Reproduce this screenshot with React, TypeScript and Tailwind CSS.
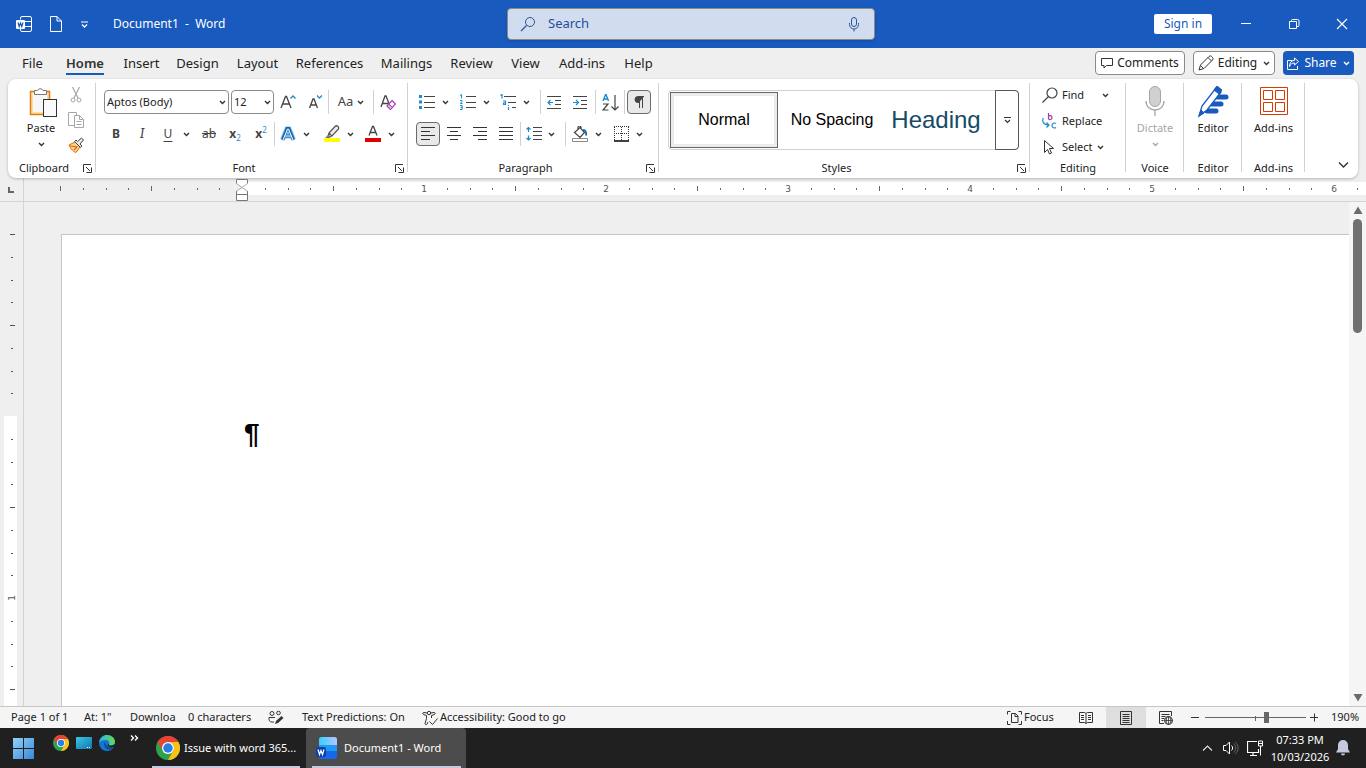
import React from 'react';

type IconProps = { w: number; h: number; className?: string; children: React.ReactNode };

const Icon: React.FC<IconProps> = ({ w, h, className = '', children }) => (
  <svg width={w} height={h} viewBox={`0 0 ${w} ${h}`} fill="none" className={`shrink-0 ${className}`} aria-hidden="true">
    {children}
  </svg>
);

const Caret: React.FC<{ className?: string }> = ({ className = 'text-[#333]' }) => (
  <Icon w={7} h={5} className={className}>
    <path d="M1 1l2.5 2.5L6 1" stroke="currentColor" strokeWidth="1.4" />
  </Icon>
);

const Sep = () => <div className="w-px h-6 bg-[#d1d1d1] shrink-0" />;

type BtnProps = { label: string; className?: string; children: React.ReactNode };

const IconButton: React.FC<BtnProps> = ({ label, className = 'w-[26px]', children }) => (
  <button aria-label={label} className={`h-6 shrink-0 flex items-center justify-center rounded hover:bg-gray-100 ${className}`}>
    {children}
  </button>
);

const CaretButton: React.FC<{ label: string }> = ({ label }) => (
  <IconButton label={label} className="w-[11px]">
    <Caret />
  </IconButton>
);

const Launcher: React.FC<{ label: string }> = ({ label }) => (
  <button aria-label={label} className="absolute right-1 top-1">
    <Icon w={9} h={9}>
      <path d="M.5 8V.5H8M3 3l4 4M8.5 3.5v5h-5" stroke="#333" />
    </Icon>
  </button>
);

type GroupProps = { title: string; className: string; launcher?: boolean; children: React.ReactNode };

const Group: React.FC<GroupProps> = ({ title, className, launcher, children }) => (
  <section aria-label={title} className={`relative flex flex-col pt-1 ${className}`}>
    <div className="h-[77px]">{children}</div>
    <div className="relative h-4 text-center leading-4">
      <span className={launcher ? 'pr-4' : ''}>{title}</span>
      {launcher && <Launcher label={`${title} settings`} />}
    </div>
    <div className="absolute right-0 top-1 bottom-[6px] w-px bg-[#d1d1d1]" />
  </section>
);

/* ---------- Title bar ---------- */

const TitleBar = () => (
  <header className="h-12 bg-[#185abd] text-white flex items-center text-xs shrink-0">
    <div className="flex-1 flex items-center pl-4">
      <button aria-label="Word">
        <Icon w={16} h={16}>
          <path d="M4.5 3.5V2A1.500 1.500 0 0 1 6 .5h8A1.500 1.500 0 0 1 15.500 2v12a1.500 1.500 0 0 1-1.500 1.500H6A1.500 1.500 0 0 1 4.500 14v-1.500M8 5.500h7.500M9 10.500h6.500" stroke="#fff" />
          <rect y="4" width="9" height="9" rx="1" fill="#fff" />
          <path d="M2 6.500l1.200 4L4.500 7l1.300 3.500 1.200-4" stroke="#185abd" strokeWidth="1.200" />
        </Icon>
      </button>
      <button aria-label="New document" className="ml-4">
        <Icon w={16} h={16}>
          <path d="M2.500.5h6.500l4.500 4.500v10.500h-11zM9 .5V5h4.500" stroke="#fff" />
        </Icon>
      </button>
      <button aria-label="Customize toolbar" className="ml-4">
        <Icon w={9} h={7}>
          <path d="M1 1h7" stroke="#fff" />
          <path d="M2 3.500L4.500 6 7 3.500" stroke="#fff" strokeWidth="1.300" />
        </Icon>
      </button>
      <h1 className="ml-6 whitespace-pre">Document1  -  Word</h1>
    </div>
    <label className="w-[368px] h-8 shrink-0 flex items-center bg-[#d1dcee] border border-[#8a8a8a] rounded px-3 shadow">
      <Icon w={16} h={16}>
        <circle cx="10" cy="6" r="4.500" stroke="#2b579a" />
        <path d="M6.500 9.500L1 15" stroke="#2b579a" strokeWidth="1.200" />
      </Icon>
      <input
        type="search"
        aria-label="Search"
        placeholder="Search"
        className="flex-1 min-w-0 ml-3 bg-transparent outline-none text-[13px] placeholder:text-[#1f4e9c]"
      />
      <Icon w={16} h={16}>
        <rect x="5.500" y="1.500" width="5" height="9" rx="2.500" stroke="#2b579a" />
        <path d="M3.500 7v1.500a4.500 4.500 0 0 0 9 0V7M8 13v2.500" stroke="#2b579a" />
      </Icon>
    </label>
    <div className="w-[491px] flex items-center justify-end">
      <button className="w-[58px] h-5 mr-2.5 bg-white text-[#185abd] rounded-xs leading-5">Sign in</button>
      <button aria-label="Minimize" className="w-12 h-12 flex items-center justify-center">
        <Icon w={12} h={12}><path d="M1 5.500h10" stroke="#fff" /></Icon>
      </button>
      <button aria-label="Restore" className="w-12 h-12 flex items-center justify-center">
        <Icon w={12} h={12}>
          <path d="M1.500 3.500h7v7h-7zM3.500 3V2.500a1 1 0 0 1 1-1h5a1.500 1.500 0 0 1 1.500 1.500v4.500a1 1 0 0 1-1 1H9" stroke="#fff" />
        </Icon>
      </button>
      <button aria-label="Close" className="w-12 h-12 flex items-center justify-center">
        <Icon w={12} h={12}><path d="M1 1l10 10M11 1L1 11" stroke="#fff" strokeWidth="1.200" /></Icon>
      </button>
    </div>
  </header>
);

/* ---------- Tabs ---------- */

const tabs = [
  { name: 'File', width: 'w-[43px]' },
  { name: 'Home', width: 'w-[62px]' },
  { name: 'Insert', width: 'w-[51px]' },
  { name: 'Design', width: 'w-[61px]' },
  { name: 'Layout', width: 'w-[59px]' },
  { name: 'References', width: 'w-[85px]' },
  { name: 'Mailings', width: 'w-[69px]' },
  { name: 'Review', width: 'w-[61px]' },
  { name: 'View', width: 'w-[47px]' },
  { name: 'Add-ins', width: 'w-[66px]' },
  { name: 'Help', width: 'w-[47px]' },
];

const TabBar = () => (
  <div className="h-[31px] flex items-start pl-[11px] pr-3 shrink-0 text-[13px]">
    <nav className="flex">
      {tabs.map((tab) => (
        <button key={tab.name} className={`flex justify-center pt-[5px] ${tab.width}`}>
          <span
            className={
              tab.name === 'Home'
                ? 'h-[22px] leading-5 border-b-2 border-[#185abd] font-semibold text-[#333]'
                : 'h-[22px] leading-5'
            }
          >
            {tab.name}
          </span>
        </button>
      ))}
    </nav>
    <div className="ml-auto flex gap-2 pt-[3px] text-xs">
      <button className="w-[90px] h-6 flex items-center justify-center gap-1 bg-white border border-[#8a8a8a] rounded">
        <Icon w={12} h={12}>
          <path d="M.5 1.500h11v7H5.500L3 11V8.500H.5z" stroke="#333" />
        </Icon>
        Comments
      </button>
      <button className="w-[82px] h-6 flex items-center justify-center gap-1 bg-white border border-[#8a8a8a] rounded">
        <Icon w={16} h={16}>
          <path d="M1 15l1.500-5L11 1.500a1.800 1.800 0 0 1 2.600 0l.9.9a1.800 1.800 0 0 1 0 2.600L6 13.500zM10 2.500L13.500 6M2.500 10.500l3 3" stroke="#333" />
        </Icon>
        Editing
        <Caret className="ml-0.5 text-[#333]" />
      </button>
      <button className="w-[71px] h-6 flex items-center justify-center gap-1 bg-[#185abd] text-white rounded">
        <Icon w={13} h={13}>
          <path d="M5.500 3.500h-5v9h10V9" stroke="#fff" />
          <path d="M7.500 1l4 3.500-4 3.500V6C5 6 3.500 7 2.500 9.500 2.500 6 4 3.500 7.500 3.300z" stroke="#fff" strokeLinejoin="round" />
        </Icon>
        Share
        <Caret className="ml-0.5 text-white" />
      </button>
    </div>
  </div>
);

/* ---------- Ribbon groups ---------- */

const ClipboardGroup = () => (
  <Group title="Clipboard" className="w-[88px]" launcher>
    <div className="flex pl-3">
      <button className="w-[42px] flex flex-col items-center pt-[3px]">
        <Icon w={32} h={32}>
          <g transform="translate(1 0)">
            <rect x="4" y="5" width="20" height="24" fill="#ffe0a3" />
            <path d="M4 5.500h19.500V14M4.500 5v23.500H17" stroke="#e07b12" strokeWidth="1.500" />
            <rect x="7" y="7" width="14" height="19" fill="#f7f7f7" />
            <path d="M8.500 8.500V4.500H11.500a3 3 0 0 1 5.500 0h3.500v4z" fill="#fff" stroke="#777" />
            <rect x="17.500" y="13.500" width="13" height="17" fill="#fafafa" stroke="#333" />
          </g>
        </Icon>
        <span className="leading-4 pt-0.5">Paste</span>
        <span className="pt-1.5"><Caret /></span>
      </button>
      <div className="flex flex-col items-center ml-0.5 gap-px">
        <IconButton label="Cut" className="w-6">
          <Icon w={12} h={18}>
            <path d="M2.500 1L8 12M9.500 1L4 12" stroke="#a6a6a6" strokeWidth="1.200" />
            <circle cx="3" cy="14" r="2" stroke="#a6a6a6" />
            <circle cx="9" cy="14" r="2" stroke="#a6a6a6" />
          </Icon>
        </IconButton>
        <IconButton label="Copy" className="w-6">
          <Icon w={16} h={18}>
            <path d="M6 14.500H.5V1.500h8V4" stroke="#a6a6a6" />
            <path d="M6.500 4.500h5L15.500 8.500v8h-9zM11.500 4.500v4h4M8.500 10.500h5M8.500 13.500h5" stroke="#a6a6a6" />
          </Icon>
        </IconButton>
        <IconButton label="Format painter" className="w-6">
          <Icon w={16} h={16}>
            <path d="M1 8l6-3 5 5-4 5.500c-2-.5-5.500-3.500-7-7.500z" fill="#ffd58a" stroke="#d8680f" />
            <path d="M2 9l7 1-3 3" stroke="#d8680f" strokeWidth="1.200" />
            <path d="M6.500 4.500l6 6 1.500-1.500-2-2 3.500-4-2-2L9.500 4.500 8 3z" fill="#e8e8e8" stroke="#444" />
          </Icon>
        </IconButton>
      </div>
    </div>
  </Group>
);

const FontGroup = () => (
  <Group title="Font" className="w-[312px]" launcher>
    <div className="h-[35px] flex items-center pl-2 pt-[3px]">
      <div className="relative">
        <select aria-label="Font name" className="w-[125px] h-6 pl-0.5 pr-4 appearance-none bg-white border border-[#8a8a8a] rounded">
          <option>Aptos (Body)</option>
        </select>
        <div className="absolute right-[3px] top-[10px] pointer-events-none"><Caret /></div>
      </div>
      <div className="relative ml-0.5">
        <select aria-label="Font size" className="w-[43px] h-6 pl-0.5 pr-4 appearance-none bg-white border border-[#8a8a8a] rounded">
          <option>12</option>
        </select>
        <div className="absolute right-[3px] top-[10px] pointer-events-none"><Caret /></div>
      </div>
      <IconButton label="Increase font size" className="ml-px w-[26px]">
        <Icon w={16} h={16}>
          <path d="M1 14L5.500 2.500h1L11 14M2.500 10h7" stroke="#444" strokeWidth="1.300" />
          <path d="M10.500 4.500L13 2l2.500 2.500" stroke="#1e8bcd" strokeWidth="1.300" />
        </Icon>
      </IconButton>
      <IconButton label="Decrease font size" className="ml-px w-[26px]">
        <Icon w={16} h={16}>
          <path d="M2.500 14L6 5h1l3.500 9M4 11h5" stroke="#444" strokeWidth="1.300" />
          <path d="M10 1.500L12.500 4 15 1.500" stroke="#1e8bcd" strokeWidth="1.300" />
        </Icon>
      </IconButton>
      <Sep />
      <IconButton label="Change case" className="w-11 gap-1">
        <span className="text-[13px] text-[#444]">Aa</span>
        <Caret />
      </IconButton>
      <Sep />
      <IconButton label="Clear formatting" className="ml-px w-[26px]">
        <Icon w={16} h={16}>
          <path d="M1 13L5 2h1l3 7.500M2.500 9.500h6" stroke="#444" strokeWidth="1.300" />
          <path d="M12 6.500l3.500 3.500-5 5.500L7 12z" fill="#fff" stroke="#a33fb0" strokeWidth="1.200" />
          <path d="M7 12l2-2 3.500 3.500-2 2z" fill="#d9a6e0" stroke="#a33fb0" />
        </Icon>
      </IconButton>
    </div>
    <div className="h-8 flex items-center pl-[7px] text-xs text-[#444]">
      <IconButton label="Bold"><b>B</b></IconButton>
      <IconButton label="Italic"><i className="font-serif text-sm">I</i></IconButton>
      <IconButton label="Underline"><span className="underline underline-offset-3">U</span></IconButton>
      <CaretButton label="Underline options" />
      <IconButton label="Strikethrough" className="ml-1 w-[26px]"><s>ab</s></IconButton>
      <IconButton label="Subscript">
        <b>x</b><span className="text-[8px] pt-2 text-[#1e8bcd]">2</span>
      </IconButton>
      <IconButton label="Superscript">
        <b>x</b><span className="text-[8px] pb-2 text-[#1e8bcd]">2</span>
      </IconButton>
      <Sep />
      <IconButton label="Text effects">
        <Icon w={16} h={16}>
          <path d="M2.500 13.500L7 3h2l4.500 10.500M5 10h6" stroke="#83c0ea" strokeWidth="5" />
          <path d="M2.500 14L7 2.500h2L13.500 14M5 10h6" stroke="#1566b0" strokeWidth="3" />
          <path d="M3 14L7.500 3h1L13 14M5 10h6" stroke="#fff" />
        </Icon>
      </IconButton>
      <CaretButton label="Text effects options" />
      <IconButton label="Highlight color" className="ml-[7px] w-[26px]">
        <Icon w={16} h={18}>
          <path d="M5 8l6-6.500c1-1 2-1 3 0s1 2 0 3L8 11zM5 8l-1 3.500 1 .5 3-1" fill="#eee" stroke="#555" strokeWidth="1.200" />
          <path d="M4 10l-3 3h5l1-2z" fill="#777" />
          <path d="M0 13h16v4H0z" fill="#ff0" />
        </Icon>
      </IconButton>
      <CaretButton label="Highlight options" />
      <IconButton label="Font color" className="ml-1 w-[26px]">
        <Icon w={16} h={18}>
          <path d="M4 10.500L7.500 1.500h1l3.500 9M5.500 7.500h5" stroke="#444" strokeWidth="1.300" />
          <path d="M0 13h16v4H0z" fill="#e00000" />
        </Icon>
      </IconButton>
      <CaretButton label="Font color options" />
    </div>
  </Group>
);

const ParagraphGroup = () => (
  <Group title="Paragraph" className="w-[251px]" launcher>
    <div className="h-[35px] flex items-center pl-[6px] pt-[3px]">
      <IconButton label="Bullets">
        <Icon w={16} h={16}>
          <path d="M0 1h3v3H0zM0 6.500h3v3H0zM0 12h3v3H0z" fill="#1e8bcd" />
          <path d="M5 2.500h11M5 8.500h11M5 13.500h11" stroke="#444" />
        </Icon>
      </IconButton>
      <CaretButton label="Bullets options" />
      <IconButton label="Numbering" className="ml-1 w-[26px]">
        <Icon w={16} h={16}>
          <path d="M0 1.500l1.500-1v4M0 6.500h2v1.200L.3 9.500H2.500M0 11.500h2.200v4H0M.5 13.500h2" stroke="#1e8bcd" />
          <path d="M6 2.500h10M6 8.500h10M6 13.500h10" stroke="#444" />
        </Icon>
      </IconButton>
      <CaretButton label="Numbering options" />
      <IconButton label="Multilevel list" className="ml-[3px] w-[26px]">
        <Icon w={16} h={16}>
          <path d="M.5 1.500l1.500-1v4M3 7h2.500v3.500H3.500V9H5.500M8.500 11v1M8.500 13v3" stroke="#1e8bcd" strokeWidth="1.200" />
          <path d="M4 2.500h12M8 8.500h8M12 13.500h4" stroke="#444" />
        </Icon>
      </IconButton>
      <CaretButton label="Multilevel options" />
      <div className="w-2" />
      <Sep />
      <IconButton label="Decrease indent">
        <Icon w={14} h={14}>
          <path d="M0 1.500h14M8 5.500h6M8 9.500h6M0 13.500h14" stroke="#444" />
          <path d="M6 7.500H1M3.500 5L1 7.500 3.500 10" stroke="#1e8bcd" strokeWidth="1.200" />
        </Icon>
      </IconButton>
      <IconButton label="Increase indent">
        <Icon w={14} h={14}>
          <path d="M0 1.500h14M8 5.500h6M8 9.500h6M0 13.500h14" stroke="#444" />
          <path d="M0 7.500h5M3 5l2.500 2.500L3 10" stroke="#1e8bcd" strokeWidth="1.200" />
        </Icon>
      </IconButton>
      <div className="w-0.5" />
      <Sep />
      <IconButton label="Sort" className="w-7">
        <Icon w={17} h={17}>
          <path d="M1 7L3.500.8h.6L6.500 7M2 5h3.500" stroke="#1e8bcd" strokeWidth="1.400" />
          <path d="M1 10h5L1 16h5.500" stroke="#444" strokeWidth="1.200" />
          <path d="M13 1v15M9.500 12.500L13 16l3.500-3.500" stroke="#444" strokeWidth="1.200" />
        </Icon>
      </IconButton>
      <Sep />
      <IconButton label="Show paragraph marks" className="ml-0.5 w-6 border border-[#6b6b6b] bg-[#e9e9e9]">
        <Icon w={10} h={12}>
          <path d="M10 .5H4a3 3 0 0 0 0 6h1" fill="#444" stroke="#444" />
          <path d="M5.500 0v12M8.500 0v12" stroke="#444" />
        </Icon>
      </IconButton>
    </div>
    <div className="h-8 flex items-center pl-2">
      <IconButton label="Align left" className="w-6 border border-[#6b6b6b] bg-[#e9e9e9]">
        <Icon w={14} h={14}><path d="M0 .5h14M0 4.500h9M0 8.500h14M0 12.500h9" stroke="#333" /></Icon>
      </IconButton>
      <IconButton label="Center" className="ml-px w-[26px]">
        <Icon w={14} h={14}><path d="M0 .5h14M3 4.500h8M0 8.500h14M3 12.500h8" stroke="#333" /></Icon>
      </IconButton>
      <IconButton label="Align right">
        <Icon w={14} h={14}><path d="M0 .5h14M5 4.500h9M0 8.500h14M5 12.500h9" stroke="#333" /></Icon>
      </IconButton>
      <IconButton label="Justify">
        <Icon w={14} h={14}><path d="M0 .5h14M0 4.500h14M0 8.500h14M0 12.500h14" stroke="#333" /></Icon>
      </IconButton>
      <div className="w-px" />
      <Sep />
      <IconButton label="Line spacing" className="ml-px w-6">
        <Icon w={16} h={16}>
          <path d="M2.500 1v5M.5 3.500l2-2 2 2M2.500 9.500v5M.5 12l2 2 2-2" stroke="#1e8bcd" strokeWidth="1.200" />
          <path d="M7 1.500h9M7 5.500h9M7 9.500h9M7 13.500h9" stroke="#444" />
        </Icon>
      </IconButton>
      <CaretButton label="Line spacing options" />
      <div className="w-2" />
      <Sep />
      <IconButton label="Shading" className="ml-px w-[26px]">
        <Icon w={16} h={16}>
          <path d="M2.500 6.500L8 1.500l4.500 5L8 11.500zM6 3V1.500a1.500 1.500 0 0 1 3 0V3" stroke="#444" strokeWidth="1.200" />
          <path d="M11 4c3 0 3.500 3 3 5.500" stroke="#1e6fb0" strokeWidth="2" />
          <path d="M.5 12.500h15v3H.5z" fill="#fff" stroke="#8a8a8a" />
        </Icon>
      </IconButton>
      <CaretButton label="Shading options" />
      <IconButton label="Borders" className="ml-1 w-[26px]">
        <Icon w={15} h={16}>
          <path d="M.5 1v13M7.500 1v13M14.500 1v13M0 .5h15M0 7.500h15" stroke="#333" strokeDasharray="1 1" />
          <path d="M0 15h15" stroke="#000" strokeWidth="1.500" />
        </Icon>
      </IconButton>
      <CaretButton label="Borders options" />
    </div>
  </Group>
);

const StylesGroup = () => (
  <Group title="Styles" className="flex-1 min-w-[371px]" launcher>
    <div className="pl-[9px] pr-[11px] pt-[7px]">
      <div className="h-[60px] flex border border-[#d1d1d1] rounded font-['Liberation_Sans',sans-serif] text-base text-black">
        <button className="w-[108px] m-px h-14 border border-[#666] shadow-[inset_0_0_0_3px_#ebebeb]">Normal</button>
        <button className="w-[106px] text-center whitespace-nowrap">No Spacing</button>
        <button className="flex-1 pr-2 text-[#164b66] text-2xl overflow-hidden">Heading</button>
        <button aria-label="More styles" className="w-6 -my-px -mr-px border border-[#555] rounded-r flex items-center justify-center">
          <Icon w={7} h={8}>
            <path d="M0 1.500h7" stroke="#333" />
            <path d="M1 4l2.500 2.500L6 4" stroke="#333" strokeWidth="1.200" />
          </Icon>
        </button>
      </div>
    </div>
  </Group>
);

const EditingGroup = () => (
  <Group title="Editing" className="w-24">
    <div className="flex flex-col items-start pl-3">
      <button className="h-6 flex items-center gap-1">
        <Icon w={16} h={16}>
          <circle cx="10" cy="6" r="5" stroke="#444" strokeWidth="1.200" />
          <path d="M6.500 9.500L.5 15.500" stroke="#444" strokeWidth="1.200" />
        </Icon>
        <span className="w-9 text-left">Find</span>
        <Caret />
      </button>
      <button className="h-7 flex items-center gap-1">
        <Icon w={16} h={16}>
          <path d="M6.500 0v6.500M6.500 3.500c1-1.500 3.500-1 3.500 1S7.500 7.500 6.500 5.500" stroke="#a33fb0" strokeWidth="1.200" />
          <path d="M14 10.500c-1.500-1-4-.5-4 2s2.500 3 4 2M1.500 5C-.5 8 1.500 12 7 12M4.500 9.500L7 12l-2.500 2.500" stroke="#1e8bcd" strokeWidth="1.200" />
        </Icon>
        Replace
      </button>
      <button className="h-6 flex items-center gap-1">
        <Icon w={16} h={16}>
          <path d="M2.500 1.500v12l3-3 2 4.500 2-1-2-4.500h4z" stroke="#333" />
        </Icon>
        Select
        <Caret />
      </button>
    </div>
  </Group>
);

const VoiceGroup = () => (
  <Group title="Voice" className="w-[58px]">
    <button disabled className="w-full flex flex-col items-center pt-[3px] text-[#a6a6a6]">
      <Icon w={20} h={32}>
        <rect x="4.500" y=".5" width="11" height="20" rx="5.500" fill="#d0d0d0" stroke="#a6a6a6" />
        <path d="M1 15c0 12 18 12 18 0M10 24v6" stroke="#a6a6a6" strokeWidth="1.300" />
      </Icon>
      <span className="leading-4 pt-0.5">Dictate</span>
      <span className="pt-1.5"><Caret className="text-[#a6a6a6]" /></span>
    </button>
  </Group>
);

const EditorGroup = () => (
  <Group title="Editor" className="w-[58px]">
    <button className="w-full flex flex-col items-center pt-[3px]">
      <Icon w={32} h={32}>
        <path d="M20 11h9M15 18h9M10 25h9" stroke="#185abd" strokeWidth="5" strokeLinecap="round" />
        <path d="M2 30l3-10L19 2l5 4L10 24z" fill="#fff" stroke="#185abd" strokeWidth="1.300" />
        <path d="M17 4l3-4 5 4-3 4zM2 30l2-6 3 3z" fill="#185abd" stroke="#185abd" />
      </Icon>
      <span className="leading-4 pt-0.5">Editor</span>
    </button>
  </Group>
);

const AddinsGroup = () => (
  <Group title="Add-ins" className="w-[63px]">
    <button className="w-full flex flex-col items-center pt-[3px]">
      <Icon w={28} h={32}>
        <path d="M.5 1.500h27v27H.5zM3.500 4.500h9v9h-9zM15.500 4.500h9v9h-9zM3.500 16.500h9v9h-9zM15.500 16.500h9v9h-9z" stroke="#d83b01" />
      </Icon>
      <span className="leading-4 pt-0.5">Add-ins</span>
    </button>
  </Group>
);

const Ribbon = () => (
  <div className="mx-2 h-[99px] flex shrink-0 bg-white rounded-lg shadow-[0_1px_3px_rgba(0,0,0,0.25)] text-[11px] relative">
    <ClipboardGroup />
    <FontGroup />
    <ParagraphGroup />
    <StylesGroup />
    <EditingGroup />
    <VoiceGroup />
    <EditorGroup />
    <AddinsGroup />
    <div className="w-[53px] flex items-end justify-end pr-[9px] pb-[9px]">
      <button aria-label="Collapse ribbon">
        <Icon w={11} h={8}><path d="M1 1.500L5.500 6 10 1.500" stroke="#333" strokeWidth="1.400" /></Icon>
      </button>
    </div>
  </div>
);

/* ---------- Rulers ---------- */

const EIGHTHS = [0, 1, 2, 3, 4, 5, 6, 7];

const HInch: React.FC<{ label?: string; edge?: boolean; className?: string }> = ({ label, edge, className = '' }) => (
  <div className={`w-[182px] h-[13px] shrink-0 grid grid-cols-8 ${className}`}>
    {EIGHTHS.map((i) => (
      <div key={i} className="flex items-center">
        {i === 0 && label && <span className="w-4 -ml-2 text-center leading-3">{label}</span>}
        {((i === 0 && edge) || i === 4) && <span className="w-px h-[5px] bg-[#666]" />}
        {i !== 0 && i !== 4 && <span className="w-px h-0.5 bg-[#666]" />}
      </div>
    ))}
  </div>
);

const HorizontalRuler = () => (
  <div className="h-6 flex shrink-0 border-b border-[#d4d4d4] font-['DejaVu_Sans',sans-serif] text-[9px] text-[#555]">
    <div className="w-6 border-r border-[#d4d4d4] flex pl-2 pt-[9px]">
      <div className="w-[6px] h-[6px] border-l-2 border-b-2 border-[#666]" />
    </div>
    <div className="flex-1 min-w-0 flex pt-1 pl-9 overflow-hidden">
      <HInch edge />
      <div className="relative flex bg-white h-[13px]">
        <HInch />
        <div className="absolute -left-[6px] -top-[3px]">
          <Icon w={13} h={24}>
            <path d="M.5 .5h11v4L6.500 9 12 13.500v8H.5v-8L6 9 .5 4.500z" fill="#fff" />
            <path d="M.5 4.500v-4h11v4M.5 12v9.500h11V12M.5 15.500h11" stroke="#777" />
            <path d="M.5 4.500L6 8.500l5.500-4M.5 12L6 8.500l5.500 3.500" stroke="#aaa" />
          </Icon>
        </div>
        {['1', '2', '3', '4', '5', '6'].map((n) => (
          <HInch key={n} label={n} />
        ))}
      </div>
    </div>
  </div>
);

const VInch: React.FC<{ label?: string; edge?: boolean; className?: string }> = ({ label, edge, className = '' }) => (
  <div className={`w-[13px] h-[182px] shrink-0 grid grid-rows-8 ${className}`}>
    {EIGHTHS.map((i) => (
      <div key={i} className="flex justify-center items-start h-px pl-[3px]">
        {i === 0 && label && <span className="h-4 -mt-2 leading-4 -rotate-90">{label}</span>}
        {((i === 0 && edge) || i === 4) && <span className="h-px w-[5px] bg-[#555]" />}
        {i !== 0 && i !== 4 && <span className="h-px w-0.5 bg-[#555]" />}
      </div>
    ))}
  </div>
);

const VerticalRuler = () => (
  <div className="w-6 shrink-0 border-r border-[#d4d4d4] pl-1 pt-8 overflow-hidden font-['DejaVu_Sans',sans-serif] text-[9px] text-[#555]">
    <VInch edge />
    <VInch className="bg-white" />
    <VInch label="1" className="bg-white" />
  </div>
);

const DocumentArea = () => (
  <div className="flex-1 min-h-0 flex">
    <VerticalRuler />
    <main className="flex-1 min-w-0 pl-[37px] pt-8">
      <div className="h-full bg-white border-l border-t border-[#c6c6c6] pl-[182px] pt-[181px]">
        <p className="font-['Liberation_Sans',sans-serif] font-bold text-[28px] leading-9 text-black">¶</p>
      </div>
    </main>
    <div className="w-[17px] shrink-0 bg-[#f5f5f5] flex flex-col items-center py-1">
      <button aria-label="Scroll up">
        <Icon w={10} h={9}><path d="M5 .5l4.500 7.500h-9z" fill="#6b6b6b" /></Icon>
      </button>
      <div className="mt-1 w-[9px] h-[114px] rounded-full bg-[#707070]" />
      <button aria-label="Scroll down" className="mt-auto">
        <Icon w={10} h={9}><path d="M5 8.500L.5 1h9z" fill="#6b6b6b" /></Icon>
      </button>
    </div>
  </div>
);

/* ---------- Status bar ---------- */

const StatusBar = () => (
  <footer className="h-[22px] flex items-center shrink-0 bg-[#f5f5f5] border-t border-[#c6c6c6] text-[11px] whitespace-nowrap">
    <button className="ml-[11px] w-[73px] text-left">Page 1 of 1</button>
    <button className="w-[46px] text-left">At: 1"</button>
    <button className="w-[58px] text-left">Downloa</button>
    <button className="w-20 text-left">0 characters</button>
    <button aria-label="Proofing" className="w-[34px]">
      <Icon w={16} h={15}>
        <circle cx="4" cy="3.500" r="2" stroke="#333" />
        <circle cx="10.500" cy="3" r="1.800" stroke="#333" />
        <path d="M7 7.500H1v2c0 2 2.500 3 5 2.500" stroke="#333" />
        <path d="M7 14l1-3 5.500-5 2 2-5.500 5z" fill="#333" />
      </Icon>
    </button>
    <button className="w-[120px] text-left">Text Predictions: On</button>
    <button className="flex items-center gap-0.5">
      <Icon w={16} h={16}>
        <circle cx="7" cy="3" r="1.700" stroke="#333" />
        <path d="M5 3L2 2.500C.5 2.500.5 4 1.500 4.500l3 1v3L3 13.500c0 1.500 1.500 1.500 2 .5l1-2M9 3l3-.5c1.500 0 1.500 1.500.5 2l-3 1V8M7.500 11.500l3 3 5-6" stroke="#333" />
      </Icon>
      Accessibility: Good to go
    </button>
    <button className="ml-auto w-[62px] flex items-center gap-0.5">
      <Icon w={15} h={14}>
        <path d="M3.500.5h-3v3M.5 10v3.500h3M11.500.5h3v3M14.500 10v3.500h-3" stroke="#333" />
        <path d="M4.500 2.500h4l2.500 2.500v6.500H4.500zM8 2.500V5.500h3" stroke="#333" />
      </Icon>
      Focus
    </button>
    <button aria-label="Read mode" className="w-[37px] h-[21px] flex items-center justify-center pr-1">
      <Icon w={14} h={14}>
        <path d="M7 2.500L5.500 1.500h-5v10h5L7 12.500l1.500-1h5v-10h-5zM7 2.500v10M2 4.500h3M2 6.500h3M2 8.500h3M9 4.500h3M9 6.500h3M9 8.500h3" stroke="#333" />
      </Icon>
    </button>
    <button aria-label="Print layout" className="w-10 h-[21px] flex items-center justify-center bg-[#dedede]">
      <Icon w={12} h={14}>
        <path d="M.5.500h11v13H.5zM2.500 3.500h7M2.500 5.500h7M2.500 7.500h7M2.500 9.500h7M2.500 11.500h7" stroke="#333" />
      </Icon>
    </button>
    <button aria-label="Web layout" className="w-10 h-[21px] flex items-center justify-center">
      <Icon w={14} h={14}>
        <path d="M5 12.500H.5V.500h12V5M2.500 3.500h8M2.500 5.500h4M2.500 7.500h3M2.500 9.500h2" stroke="#333" />
        <circle cx="9.500" cy="9.500" r="3.800" stroke="#333" strokeWidth="1.200" />
        <path d="M9.500 6v7M6 9.500h7.500M8 6.500c-1 2-1 4 0 6M11 6.500c1 2 1 4 0 6" stroke="#333" strokeWidth=".8" />
      </Icon>
    </button>
    <button aria-label="Zoom out" className="ml-[5px] w-[14px] h-5 flex items-center">
      <Icon w={9} h={9}><path d="M0 4.500h8" stroke="#333" /></Icon>
    </button>
    <div className="relative w-[101px] h-4">
      <div className="absolute left-[50px] top-[6px] w-px h-[5px] bg-[#666]" />
      <input
        type="range"
        aria-label="Zoom"
        min={0}
        max={100}
        defaultValue={61}
        className="relative block w-full h-4 appearance-none bg-transparent [&::-webkit-slider-runnable-track]:h-px [&::-webkit-slider-runnable-track]:bg-[#666] [&::-webkit-slider-thumb]:appearance-none [&::-webkit-slider-thumb]:w-[5px] [&::-webkit-slider-thumb]:h-[11px] [&::-webkit-slider-thumb]:-mt-[5px] [&::-webkit-slider-thumb]:bg-[#666]"
      />
    </div>
    <button aria-label="Zoom in" className="ml-1 w-[21px] h-5 flex items-center">
      <Icon w={9} h={9}><path d="M0 4.500h8M4.500 .5v8" stroke="#333" /></Icon>
    </button>
    <button className="w-[35px] text-left">190%</button>
  </footer>
);

/* ---------- Taskbar ---------- */

const Chrome: React.FC<{ className: string }> = ({ className }) => (
  <svg viewBox="0 0 48 48" className={`shrink-0 ${className}`} aria-hidden="true">
    <circle cx="24" cy="24" r="24" fill="#2fa24c" />
    <path d="M3.200 12A24 24 0 0 1 44.800 12H24A12 12 0 0 0 13.600 30z" fill="#ea4335" />
    <path d="M44.800 12A24 24 0 0 1 24 48L34.400 30A12 12 0 0 0 24 12z" fill="#fbc116" />
    <circle cx="24" cy="24" r="12" fill="#fff" />
    <circle cx="24" cy="24" r="9.500" fill="#2a7de9" />
  </svg>
);

const Taskbar = () => (
  <div className="h-10 flex shrink-0 bg-[#202020] text-white text-[11px]">
    <button aria-label="Start" className="w-[46px] flex items-center justify-center">
      <Icon w={21} h={21}>
        <defs>
          <linearGradient id="win" x1="0" y1="0" x2="1" y2="1">
            <stop stopColor="#8fd3f7" />
            <stop offset="1" stopColor="#3a86d8" />
          </linearGradient>
        </defs>
        <path d="M0 0h10v10H0zM11 0h10v10H11zM0 11h10v10H0zM11 11h10v10H11z" fill="url(#win)" />
      </Icon>
    </button>
    <div className="w-[106px] flex items-start gap-[7px] pl-[7px] pt-[7px]">
      <button aria-label="Chrome"><Chrome className="w-4 h-4" /></button>
      <button aria-label="Show desktop">
        <Icon w={16} h={16}>
          <defs>
            <linearGradient id="desk" x1="0" y1="0" x2="1" y2="1">
              <stop stopColor="#38c9e0" />
              <stop offset="1" stopColor="#1373b0" />
            </linearGradient>
          </defs>
          <rect y="2" width="16" height="12" rx="1" fill="url(#desk)" />
          <path d="M11 12.500h1M13 12.500h1" stroke="#fff" />
        </Icon>
      </button>
      <button aria-label="Edge">
        <Icon w={16} h={16}>
          <defs>
            <linearGradient id="edgeTop" x1="0" y1="0" x2="1" y2="0">
              <stop stopColor="#2bb5ea" />
              <stop offset="1" stopColor="#66d94b" />
            </linearGradient>
          </defs>
          <circle cx="8" cy="8" r="8" fill="#1477cf" />
          <path d="M0 7.500C1 2.500 4.500 0 8 0c4.500 0 8 3.200 8 6.800 0 2.400-2 3.700-4 3.700-1.500 0-2.500-.6-2-1.300C11 7 9.500 5 6.500 5 3.500 5 1 6 0 7.500z" fill="url(#edgeTop)" />
          <path d="M6 7c-2 2.500-.5 7 4 7.500 2 .2 4-.8 5-2.500-3.500 1.500-8 0-9-5z" fill="#0d4a94" />
          <path d="M10 9.200c-.5.700.5 1.300 2 1.300 1.300 0 2.600-.5 3.300-1.500L16 11l-1.500 1C12 13 9 12 8.500 9z" fill="#202020" />
        </Icon>
      </button>
      <button aria-label="More toolbars" className="ml-2">
        <Icon w={9} h={6}><path d="M1 .500l2.500 2.500L1 5.500M5 .500l2.500 2.500L5 5.500" stroke="#fff" strokeWidth="1.400" /></Icon>
      </button>
    </div>
    <button className="w-[148px] flex items-center gap-1 pl-1 pt-0.5 border-b-2 border-[#c5c9e0] whitespace-nowrap">
      <Chrome className="w-6 h-6" />
      Issue with word 365...
    </button>
    <button className="relative ml-[6px] w-[160px] flex items-center gap-[6px] pl-[10px] rounded-t bg-[#4c4c4c] whitespace-nowrap">
      <Icon w={22} h={22}>
        <defs>
          <linearGradient id="wordTop" x1="0" y1="0" x2="1" y2="0">
            <stop stopColor="#35d0fb" />
            <stop offset="1" stopColor="#b8c4ff" />
          </linearGradient>
        </defs>
        <rect x="3" width="18" height="22" rx="2.500" fill="#1668e8" />
        <path d="M3 8V2.500A2.500 2.500 0 0 1 5.500 0h13A2.500 2.500 0 0 1 21 2.500V8z" fill="url(#wordTop)" />
        <path d="M3 8h18v6H3z" fill="#1f9bf5" />
        <rect y="10" width="10" height="10" rx="2" fill="#0b3fae" />
        <path d="M2 12.500l1.500 5L5 13.500l1.500 4 1.500-5" stroke="#fff" strokeWidth="1.300" />
      </Icon>
      Document1 - Word
      <span className="absolute left-[6px] right-[5px] bottom-0 h-0.5 bg-[#c5c9e0]" />
    </button>
    <div className="ml-auto flex items-center">
      <button aria-label="Show hidden icons" className="w-6 flex justify-center mr-1">
        <Icon w={11} h={7}><path d="M1 5.500L5.500 1 10 5.500" stroke="#ddd" strokeWidth="1.200" /></Icon>
      </button>
      <button aria-label="Volume">
        <Icon w={16} h={14}>
          <path d="M.5 4.500H3L6.500 1v12L3 9.500H.5z" stroke="#fff" />
          <path d="M8.500 4.500c1.500 1.500 1.500 3.500 0 5" stroke="#fff" />
          <path d="M10.500 2.500c3 3 3 6 0 9M12.500 1c3.500 4 3.500 8 0 12" stroke="#666" />
        </Icon>
      </button>
      <button aria-label="Network" className="ml-2">
        <Icon w={17} h={17}>
          <path d="M10 1.500H.5v11h11V9M6 12.500v3M3 15.500h7" stroke="#fff" strokeWidth="1.200" />
          <path d="M11.500 1h4v5h-4zM11.500 3.500h4M13.500 6v9.500" stroke="#fff" />
        </Icon>
      </button>
      <button className="w-[72px] text-center leading-[17px]">
        07:33 PM
        <br />
        10/03/2026
      </button>
      <button aria-label="Notifications" className="mr-4">
        <Icon w={14} h={16}>
          <path d="M7 0a5 5 0 0 1 5 5v4l2 3.500H0L2 9V5a5 5 0 0 1 5-5zM5 13.500h4a2 2 0 0 1-4 0z" fill="#c5c9e0" />
        </Icon>
      </button>
    </div>
  </div>
);

const App: React.FC = () => (
  <div className="h-screen flex flex-col overflow-hidden bg-[#efefef] text-[#222] font-['Noto_Sans',sans-serif]">
    <TitleBar />
    <TabBar />
    <Ribbon />
    <HorizontalRuler />
    <DocumentArea />
    <StatusBar />
    <Taskbar />
  </div>
);

export default App;
